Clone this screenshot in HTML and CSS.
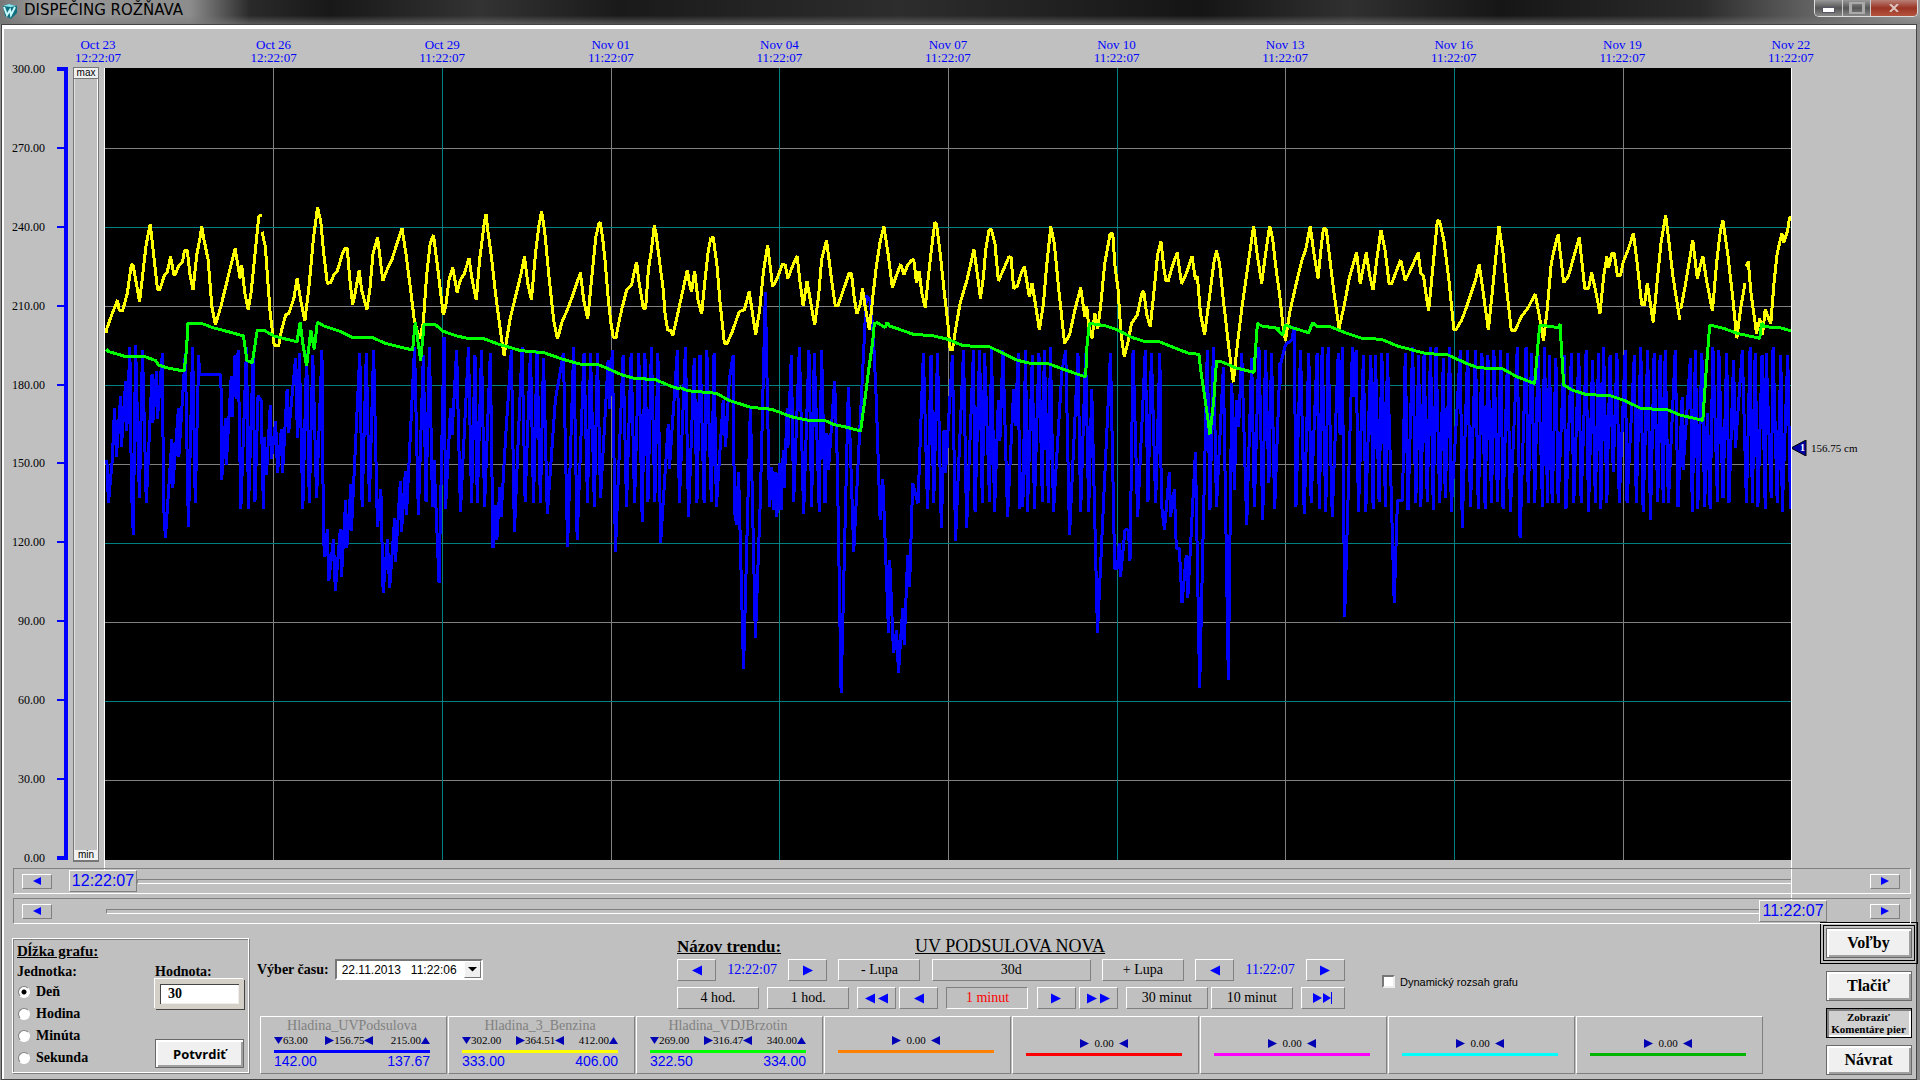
FILE: index.html
```
<!DOCTYPE html>
<html lang="sk">
<head>
  <meta charset="UTF-8">
  <meta name="viewport" content="width=device-width, initial-scale=1.0">
  <title>DISPEČING ROŽŇAVA</title>
  <link rel="stylesheet" href="styles.css">
</head>
<body>
  <!-- icon symbols -->
  <svg class="symbols" aria-hidden="true">
    <symbol id="left" viewBox="0 0 10 10"><path d="M10 0v10L0 5z"/></symbol>
    <symbol id="right" viewBox="0 0 10 10"><path d="M0 0v10l10-5z"/></symbol>
    <symbol id="up" viewBox="0 0 10 10"><path d="M0 9h10L5 1z"/></symbol>
    <symbol id="down" viewBox="0 0 10 10"><path d="M0 1h10L5 9z"/></symbol>
    <symbol id="end" viewBox="0 0 20 12"><path d="M0 1v10l9-5zM10 1v10l8-5zM18 0h1v12h-1z"/></symbol>
  </svg>

  <!-- title bar -->
  <header class="titlebar">
    <svg class="logo" viewBox="0 0 16 16" aria-hidden="true">
      <path d="M1 3l6-2 8 2v7l-6 6-6-3z" fill="#0e6f7f"/>
      <path d="M1 3l6-2 7 2-5 1z" fill="#8fe6ee"/>
      <path d="M2 4l3 8 3-5 1 5 4-8" fill="none" stroke="#c8f8fb" stroke-width="2"/>
    </svg>
    <h1>DISPEČING ROŽŇAVA</h1>
    <div class="window-buttons">
      <button class="minimize" aria-label="Minimalizovať"></button>
      <button class="maximize" aria-label="Maximalizovať"></button>
      <button class="close" aria-label="Zavrieť"><svg viewBox="0 0 10 8"><path d="M1 0l8 8M9 0L1 8"/></svg></button>
    </div>
  </header>

  <main class="window">
    <!-- trend chart -->
    <section class="trend">
      <ol class="times">
        <li>Oct 23<br>12:22:07</li>
        <li>Oct 26<br>12:22:07</li>
        <li>Oct 29<br>11:22:07</li>
        <li>Nov 01<br>11:22:07</li>
        <li>Nov 04<br>11:22:07</li>
        <li>Nov 07<br>11:22:07</li>
        <li>Nov 10<br>11:22:07</li>
        <li>Nov 13<br>11:22:07</li>
        <li>Nov 16<br>11:22:07</li>
        <li>Nov 19<br>11:22:07</li>
        <li>Nov 22<br>11:22:07</li>
      </ol>
      <ol class="scale">
        <li>300.00</li>
        <li>270.00</li>
        <li>240.00</li>
        <li>210.00</li>
        <li>180.00</li>
        <li>150.00</li>
        <li>120.00</li>
        <li>90.00</li>
        <li>60.00</li>
        <li>30.00</li>
        <li>0.00</li>
      </ol>
      <div class="range">
        <button>max</button>
        <button>min</button>
      </div>
      <div class="plot">
        <svg viewBox="105 68 1686 792" preserveAspectRatio="none" role="img" aria-label="Trend UV PODSULOVA NOVA">
          <path class="grid" d="M105 148.500H1791M105 306.500H1791M105 464.500H1791M105 622.500H1791M105 780.500H1791M273.500 68V860M611.500 68V860M948.500 68V860M1285.500 68V860M1623.500 68V860"/>
          <path class="grid alt" d="M105 227.500H1791M105 385.500H1791M105 543.500H1791M105 701.500H1791M442.500 68V860M779.500 68V860M1117.500 68V860M1454.500 68V860"/>

          <!-- Hladina_UVPodsulova -->
          <g class="line blue">
            <polyline transform="translate(100 300) scale(.38265 .33333)" points="18,480 22,610 32,480 38,325 43,470 54,287 56,440 67,243 70,392 78,142 82,560 87,706 93,136 103,595 111,150 121,610 136,222 138,368 148,213 150,358 163,160 166,610 171,715 188,418 190,565 205,325 206,470 223,160 231,682 242,142 249,610 258,166 260,225 316,225 318,540 328,355 330,495 343,228 345,352 353,166 357,296 361,150 368,628 383,140 388,628 400,175 405,605 413,287 421,302 427,628 430,412 435,525 445,316 448,478 459,364 464,518 474,388 477,518 489,268 493,398 511,175 516,415 521,160 530,628 540,160 547,610 556,166 566,595 580,150 584,720 588,770 594,688 598,842 610,718 615,872 628,688 631,832 642,600 645,745 656,552 657,692 679,160 685,620 696,160 704,605 715,150 725,682 734,568 740,880 751,718 757,865 770,655 772,785 785,544 788,697 798,514 801,645 822,142 832,645 845,166 852,605 861,142 869,620 873,480 886,848 899,112 903,628 916,325 920,405 932,150 942,635 963,142 971,610 980,166 986,610 997,150 1005,620 1020,160 1027,745 1034,616 1037,720 1045,562 1048,652 1060,412 1075,150 1083,697 1103,142 1111,605 1125,150 1133,610 1142,150 1151,610 1159,175 1169,643 1190,300 1211,160 1222,740 1238,142 1247,720 1265,160 1274,610 1282,160 1292,620 1300,160 1308,595 1328,180 1331,328 1339,150 1347,755 1367,166 1376,620 1388,160 1397,610 1408,160 1417,667 1424,160 1432,605 1441,142 1450,605 1458,160 1465,730 1485,373 1488,508 1509,150 1514,610 1530,142 1538,652 1553,175 1560,610 1568,166"/>
            <polyline transform="translate(680 200) scale(.38265 .33333)" points="53,465 63,910 70,450 82,905 89,460 95,920 113,600 119,740 129,537 139,465 142,930 148,975 153,815 166,1408 184,617 197,1315 210,900 223,277 234,920 240,800 244,930 250,815 253,950 260,790 264,930 270,750 272,865 280,625 282,745 291,465 297,905 312,442 323,943 337,450 344,920 351,460 364,935 370,450 379,910 384,700 388,810 404,543 411,780 421,1480 440,562 454,1055 472,640 487,287 497,303 505,400 513,600 523,960 530,837 545,1298 548,1080 558,1360 566,1290 571,1418 582,1225 586,1335 595,1065 600,1160 608,850 622,910 636,460 647,928 656,465 663,910 673,460 683,983 690,690 694,818 712,465 720,1022 741,450 749,983 767,450 771,935 783,450 790,910 796,460 809,905 814,442 822,935 832,600 836,722 844,450 856,950 872,567 876,677 884,460 888,928 894,815 896,920 903,450 908,935 921,465 926,928 938,460 947,905 952,450 963,910 968,442 976,935 998,514 1008,450 1018,1006 1040,460 1047,935 1060,460 1068,935 1076,568 1091,1298 1125,460 1136,1105 1143,1105 1148,1028 1151,1132 1163,990 1172,990 1176,1083 1184,450 1196,950 1216,450 1223,905 1232,460 1243,910 1254,460 1258,910 1266,990 1279,815 1282,950 1292,868 1297,1045 1305,1045 1312,1210 1323,1065 1327,1195 1347,757 1358,1465 1378,450 1385,930 1394,442 1402,920 1420,500 1433,1440 1442,550 1449,870 1454,600 1460,680 1468,460 1481,975 1494,475 1501,920 1513,442 1523,960 1530,450 1539,850 1546,460 1554,928 1568,490"/>
            <polyline transform="translate(1200 200) scale(.45918 .33333)" points="174,560 176,490 186,435 200,420 205,380 209,920 219,450 227,943 237,460 242,910 255,460 260,928 266,442 274,935 279,442 288,950 301,460 305,705 310,442 315,1250 332,442 336,590 340,450 345,935 356,465 361,935 372,465 377,928 382,465 390,905 396,460 404,920 408,460 423,1210 430,902 441,902 447,460 453,930 463,442 470,910 476,465 481,920 488,460 495,905 502,442 508,930 514,442 522,910 530,475 534,895 544,442 547,935 567,450 571,983 583,450 589,920 600,450 606,928 614,460 621,928 627,465 635,910 640,450 648,905 655,450 660,928 670,460 676,935 691,442 697,1015 710,442 715,910 722,460 729,910 736,460 746,920 750,442 757,910 761,465 767,910 775,475 780,910 793,465 797,928 809,460 814,910 825,460 830,910 841,450 846,935 855,480 861,910 868,460 873,928 879,442 886,910 893,465 900,815 908,460 913,910 926,450 930,910 946,465 950,910 960,442 965,935 975,450 981,960 989,460 997,905 1002,465 1009,910 1013,450 1020,910 1035,450 1041,920 1050,590 1052,810 1068,475 1072,935 1079,450 1084,928 1093,460 1099,920 1105,640 1111,928 1117,442 1127,905 1130,450 1139,895 1147,460 1152,910 1162,480 1166,745 1181,450 1190,910 1198,442 1203,910 1209,460 1215,920 1224,465 1231,928 1233,460 1244,895 1248,442 1257,910 1265,465 1268,935 1280,465 1286,928"/>
          </g>

          <!-- Hladina_3_Benzina -->
          <g class="line yellow">
            <polyline transform="scale(.40816 .33333)" points="262,1000 262,985 275,940 288,900 292,930 300,933 312,880 322,792 326,795 342,905 358,735 368,672 386,870 392,868 403,825 410,815 418,770 426,825 430,822 438,797 447,785 452,752 459,752 465,820 473,870 482,765 490,715 494,678 500,720 510,780 519,920 528,975 542,915 562,815 576,745 588,835 592,795 600,880 608,928 615,880 625,760 634,648 641,648"/>
            <polyline transform="scale(.40816 .33333)" points="642,695 650,740 656,840 662,940 672,1037 683,1037 690,990 700,945 708,940 720,895 728,835 738,910 747,962 757,860 768,715 778,622 786,665 793,760 802,850 810,848 818,825 826,815 838,765 845,745 851,747 856,825 864,915 870,880 880,810 886,870 899,928 906,870 914,760 925,712 938,842 948,810 960,780 974,725 985,685 995,765 1005,860 1015,960 1028,1017 1037,970 1045,830 1054,730 1062,705 1072,800 1086,945 1092,920 1100,840 1109,803 1120,877 1128,840 1138,820 1149,775 1157,840 1167,900 1175,780 1187,665 1191,642 1195,690 1205,780 1215,890 1228,1010 1235,1066 1250,955 1265,880 1275,830 1285,770 1293,850 1302,900 1312,760 1320,680 1327,633 1335,700 1345,830 1357,965 1366,1017 1377,965 1390,930 1405,880 1422,818 1430,900 1440,957 1450,830 1460,710 1468,668 1472,670"/>
            <polyline transform="translate(600 200) scale(.33333)" points="1,68 8,115 15,180 25,300 33,370 40,413 48,413 56,370 66,325 80,270 95,255 103,215 110,186 116,240 130,325 137,325 145,210 155,145 163,77 168,100 178,180 190,270 195,340 203,390 213,392 218,408 228,365 240,310 250,265 262,210 268,250 275,275 284,213 294,300 305,342 315,240 325,150 333,113"/>
            <polyline transform="translate(680 200) scale(.38265 .33333)" points="80,113 87,113 97,200 104,300 116,430 123,430 135,400 155,335 168,330 181,275 190,345 198,405 208,330 218,215 229,135 242,260 252,240 268,192 275,195 282,235 297,190 306,168 313,240 322,318 332,243 342,310 352,375 362,290 370,180 383,120 395,230 406,318 413,316 430,260 442,220 448,220 455,290 462,342 472,310 477,265 484,320 495,390 504,290 513,200 523,125 533,80 543,155 555,262 563,235 577,192 585,225 595,195 606,180 611,180 618,248 625,213 632,280 641,323 650,220 660,120 666,68 670,70 680,160 690,270 700,370 706,450 712,450 720,390 732,310 750,240 760,190 768,147 778,230 785,295 793,230 799,150 808,88 814,90 823,130 832,243 845,210 860,170 865,172 872,265 882,258 890,225 900,200 913,290 920,250 930,320 939,390 950,310 958,200 969,80 978,130 990,270 1005,430 1018,405 1032,330 1047,262 1058,350 1063,320 1068,375 1077,415 1084,340 1092,385 1100,310 1110,190 1124,102 1131,102 1137,200 1145,270 1152,395 1161,470 1172,420 1180,370 1195,345 1208,275 1212,275 1220,345 1229,380 1240,260 1248,165 1257,125 1264,200 1270,243 1276,243 1285,205 1299,158 1311,252 1325,215 1338,168 1347,240 1352,228 1360,340 1371,405 1385,280 1395,190 1402,152 1410,190 1420,300 1435,450 1446,547 1458,420 1470,310 1485,190 1499,78 1508,160 1520,250 1530,165 1541,78"/>
            <polyline transform="translate(1200 200) scale(.45918 .33333)" points="152,78 158,115 166,210 174,290 180,370 186,422 195,340 208,260 222,180 230,150 240,78 248,160 257,235 264,140 269,85 275,88 283,180 292,280 303,385 315,310 325,235 341,158 349,250 362,158 370,230 377,270 385,180 394,90 403,150 412,252 418,250 425,222 437,180 447,242 460,205 475,158 481,220 487,230 493,290 498,333 508,190 517,62 522,64 531,120 542,240 553,390 558,388 570,360 582,315 600,240 608,192 618,290 628,390 637,270 645,160 651,78 660,160 668,270 678,392 686,392 700,350 715,322 730,282 738,340 748,422 756,330 765,190 772,145 780,103 792,248 802,230 815,165 826,113 838,266 846,266 853,218 862,275 871,340 879,230 886,170 890,203 897,160 902,160 909,228 916,225 922,185 932,150 944,100 952,190 962,315 968,315 974,250 987,367 996,240 1004,130 1014,45 1020,110 1030,230 1045,360"/>
            <polyline transform="translate(1200 200) scale(.45918 .33333)" points="1047,328 1055,270 1065,190 1073,120 1083,235 1095,168 1103,240 1116,333 1125,190 1133,95 1139,62 1150,170 1160,290 1169,415 1178,320 1187,250"/>
            <polyline transform="translate(1200 200) scale(.45918 .33333)" points="1189,200 1194,185 1200,280 1212,400 1219,355 1225,405 1231,328 1243,372 1250,250 1257,160 1267,100 1271,128 1280,90 1284,52 1288,52"/>
          </g>

          <!-- Hladina_VDJBrzotin -->
          <g class="line green">
            <polyline transform="translate(100 300) scale(.38265 .33333)" points="16,147 22,155 45,162 70,171 120,171 146,182 152,195 180,205 220,213 226,150 230,68 235,72 270,72 295,83 335,95 375,108 384,182 398,188 411,90 430,92 455,108 485,117 515,125 523,66 530,130 540,198 551,92 560,148 568,66 585,78 630,95 660,113 715,114 745,130 780,140 817,150 824,66 838,183 847,72 878,75 895,93 930,107 960,115 1005,117 1040,132 1100,152 1160,158 1210,178 1260,194 1305,195 1365,225 1400,236 1450,238 1495,260 1516,267"/>
            <polyline transform="translate(680 200) scale(.38265 .33333)" points="0,563 20,572 95,580 130,602 185,622 240,628 290,650 330,660 380,662 400,673 440,683 472,693 483,600 493,510 503,430 508,370 515,368 536,382 541,368 548,378 610,403 660,407 700,418 740,437 810,441 880,480 910,489 960,490 1000,507 1060,531 1064,430 1070,370 1110,377 1140,388 1180,412 1210,423 1255,426 1300,447 1330,460 1356,463 1362,520 1370,580 1385,703 1395,600 1402,483 1420,487 1450,503 1500,517 1509,370 1520,378 1568,386"/>
            <polyline transform="translate(1200 200) scale(.45918 .33333)" points="165,385 180,405 186,375 200,383 237,398 245,368 255,380 285,381 320,400 350,414 395,418 430,438 490,460 540,465 580,490 605,503 660,507 690,530 729,551 735,450 740,375 780,383 784,372 792,555 810,570 840,583 895,588 925,602 960,625 1020,630 1045,645 1095,661 1103,500 1110,375 1140,385 1170,400 1219,415 1223,370 1230,380 1265,384 1288,393"/>
          </g>
        </svg>
        <!-- current value of the selected pen -->
        <div class="marker">
          <svg viewBox="0 0 16 16" aria-hidden="true"><path d="M0 8L15 0v16z"/></svg>
          <b>1</b>
          <span>156.75 cm</span>
        </div>
      </div>
    </section>

    <!-- time scrollers -->
    <div class="scroller from">
      <button aria-label="Začiatok späť"><svg><use href="#left"/></svg></button>
      <output>12:22:07</output>
      <div class="track"></div>
      <button aria-label="Začiatok dopredu"><svg><use href="#right"/></svg></button>
    </div>
    <div class="scroller to">
      <button aria-label="Koniec späť"><svg><use href="#left"/></svg></button>
      <div class="track"></div>
      <output>11:22:07</output>
      <button aria-label="Koniec dopredu"><svg><use href="#right"/></svg></button>
    </div>

    <section class="controls">
      <!-- chart length -->
      <form class="length">
        <div class="units">
          <h2>Dĺžka grafu:</h2>
          <h3>Jednotka:</h3>
          <label><input type="radio" name="unit" checked> Deň</label>
          <label><input type="radio" name="unit"> Hodina</label>
          <label><input type="radio" name="unit"> Minúta</label>
          <label><input type="radio" name="unit"> Sekunda</label>
        </div>
        <div class="amount">
          <label for="amount">Hodnota:</label>
          <input type="text" id="amount" value="30">
          <button type="button">Potvrdiť</button>
        </div>
      </form>

      <div class="center">
        <div class="top">
          <div class="picker">
            <label for="time">Výber času:</label>
            <div class="combo">
              <input type="text" id="time" value="22.11.2013   11:22:06">
              <button aria-label="Otvoriť kalendár"><svg viewBox="0 0 8 4"><path d="M0 0h8L4 4z"/></svg></button>
            </div>
          </div>

          <div class="nav">
            <div class="names">
              <h2>Názov trendu:</h2>
              <p>UV PODSULOVA NOVA</p>
            </div>
            <div class="row">
              <button class="small" aria-label="Späť"><svg><use href="#left"/></svg></button>
              <output>12:22:07</output>
              <button class="small" aria-label="Dopredu"><svg><use href="#right"/></svg></button>
              <button>- Lupa</button>
              <button class="wide">30d</button>
              <button>+ Lupa</button>
              <button class="small" aria-label="Späť"><svg><use href="#left"/></svg></button>
              <output>11:22:07</output>
              <button class="small" aria-label="Dopredu"><svg><use href="#right"/></svg></button>
            </div>
            <div class="row">
              <button>4 hod.</button>
              <button>1 hod.</button>
              <div class="pair">
                <button class="small" aria-label="Rýchlo späť"><svg><use href="#left"/></svg><svg><use href="#left"/></svg></button>
                <button class="small" aria-label="Späť"><svg><use href="#left"/></svg></button>
              </div>
              <button class="active">1 minut</button>
              <div class="pair">
                <button class="small" aria-label="Dopredu"><svg><use href="#right"/></svg></button>
                <button class="small" aria-label="Rýchlo dopredu"><svg><use href="#right"/></svg><svg><use href="#right"/></svg></button>
              </div>
              <div class="pair">
                <button>30 minut</button>
                <button>10 minut</button>
              </div>
              <button class="last" aria-label="Na koniec"><svg class="end"><use href="#end"/></svg></button>
            </div>
          </div>

          <label class="dynamic"><input type="checkbox"> Dynamický rozsah grafu</label>
        </div>

        <!-- pens -->
        <ul class="pens">
          <li class="pen blue">
            <h4>Hladina_UVPodsulova</h4>
            <div class="values">
              <span><svg><use href="#down"/></svg>63.00</span>
              <span><svg><use href="#right"/></svg>156.75<svg><use href="#left"/></svg></span>
              <span>215.00<svg><use href="#up"/></svg></span>
            </div>
            <hr>
            <div class="limits"><span>142.00</span><span>137.67</span></div>
          </li>
          <li class="pen yellow">
            <h4>Hladina_3_Benzina</h4>
            <div class="values">
              <span><svg><use href="#down"/></svg>302.00</span>
              <span><svg><use href="#right"/></svg>364.51<svg><use href="#left"/></svg></span>
              <span>412.00<svg><use href="#up"/></svg></span>
            </div>
            <hr>
            <div class="limits"><span>333.00</span><span>406.00</span></div>
          </li>
          <li class="pen green">
            <h4>Hladina_VDJBrzotin</h4>
            <div class="values">
              <span><svg><use href="#down"/></svg>269.00</span>
              <span><svg><use href="#right"/></svg>316.47<svg><use href="#left"/></svg></span>
              <span>340.00<svg><use href="#up"/></svg></span>
            </div>
            <hr>
            <div class="limits"><span>322.50</span><span>334.00</span></div>
          </li>
          <li class="pen empty orange">
            <div class="values"><svg><use href="#right"/></svg>0.00<svg><use href="#left"/></svg></div>
            <hr>
          </li>
          <li class="pen empty red">
            <div class="values"><svg><use href="#right"/></svg>0.00<svg><use href="#left"/></svg></div>
            <hr>
          </li>
          <li class="pen empty magenta">
            <div class="values"><svg><use href="#right"/></svg>0.00<svg><use href="#left"/></svg></div>
            <hr>
          </li>
          <li class="pen empty cyan">
            <div class="values"><svg><use href="#right"/></svg>0.00<svg><use href="#left"/></svg></div>
            <hr>
          </li>
          <li class="pen empty dark-green">
            <div class="values"><svg><use href="#right"/></svg>0.00<svg><use href="#left"/></svg></div>
            <hr>
          </li>
        </ul>
      </div>

      <nav class="actions">
        <div class="focus"><button>Voľby</button></div>
        <button>Tlačiť</button>
        <button class="pressed">Zobraziť<br>Komentáre pier</button>
        <button>Návrat</button>
      </nav>
    </section>
  </main>
</body>
</html>
```

FILE: styles.css
```
* {
  margin: 0;
  padding: 0;
  box-sizing: border-box;
}

body {
  display: flex;
  flex-direction: column;
  min-height: 100vh;
  background: #8c8c8c;
  font-family: "Liberation Serif", "Times New Roman", serif;
  font-size: 14px;
  color: #000;
}

ol,
ul {
  list-style: none;
}

button,
input {
  font: inherit;
  color: inherit;
  border-radius: 0;
}

svg {
  display: block;
}

.symbols {
  position: absolute;
  width: 0;
  height: 0;
}

/* title bar */
.titlebar {
  display: flex;
  align-items: flex-start;
  height: 24px;
  padding-left: 2px;
  background:
    linear-gradient(rgba(0, 0, 0, 0) 65%, rgba(120, 120, 120, 0.6)),
    linear-gradient(90deg, #777 0, #9a9a9a 40px, #8c8c8c 190px, #2a2a2a 250px, #181818 330px, #333 480px, #1a1a1a 620px, #2d2d2d 900px, #151515 1200px, #303030 1350px, #161616 1500px, #2b2b2b 1700px, #999 100%);
}

.logo {
  width: 16px;
  height: 16px;
  margin-top: 3px;
}

.titlebar h1 {
  flex: 1;
  margin-left: 6px;
  font: 15px/21px "DejaVu Sans", sans-serif;
}

.window-buttons {
  display: flex;
  height: 17px;
  margin-right: 2px;
  border: 1px solid #ddd;
  border-top: 0;
  border-radius: 0 0 5px 5px;
  overflow: hidden;
}

.window-buttons button {
  display: flex;
  justify-content: center;
  align-items: center;
  width: 28px;
  border: 0;
  border-right: 1px solid #ccc;
  background: linear-gradient(#999, #555 50%, #888);
}

.minimize::before {
  content: "";
  width: 11px;
  height: 4px;
  margin-top: 4px;
  background: #fff;
  border: 1px solid #556;
}

.maximize::before {
  content: "";
  width: 10px;
  height: 8px;
  border: 3px solid #aaa;
  border-width: 2px 3px;
}

.window-buttons .close {
  width: 46px;
  border-right: 0;
  background: linear-gradient(#b98078, #9a3424 50%, #b4543f);
}

.close svg {
  width: 10px;
  height: 8px;
  stroke: #ddc4c0;
  stroke-width: 2;
}

/* window */
.window {
  flex: 1;
  display: flex;
  flex-direction: column;
  margin: 0 3px 1px 1px;
  padding: 1px 0 0 2px;
  border: 1px solid #444;
  background: #c0c0c0;
  box-shadow: inset 2px 4px #fff;
}

/* trend chart */
.trend {
  flex: 1;
  display: grid;
  grid-template-columns: 64px 37px 1fr 125px;
  grid-template-rows: 42px 1fr;
}

.times {
  grid-column: 3;
  display: flex;
  justify-content: space-between;
  margin: 0 -24px 0 -38px;
  padding-top: 12px;
  font-size: 13px;
  line-height: 13px;
  text-align: center;
  color: #00f;
}

.times li {
  width: 48px;
}

.times li:first-child {
  width: 62px;
}

.scale {
  grid-column: 1;
  display: flex;
  flex-direction: column;
  justify-content: space-between;
  margin: -8px 0 -7px;
  background: linear-gradient(#00f, #00f) right 50% / 4px calc(100% - 14px) no-repeat;
  font-size: 12px;
  line-height: 18px;
}

.scale li {
  display: flex;
  justify-content: flex-end;
  align-items: center;
  gap: 12px;
}

.scale li::after {
  content: "";
  width: 11px;
  height: 2px;
  background: #00f;
}

.scale li:first-child::after,
.scale li:last-child::after {
  height: 4px;
}

.range {
  display: flex;
  flex-direction: column;
  justify-content: space-between;
  margin: -1px 6px -2px 5px;
  border: 1px solid #777;
  background: #c0c0c0;
  box-shadow: inset 1px 0 #e0e0e0, inset -1px 0 #fff;
}

.range button {
  height: 11px;
  border: 1px solid #777;
  border-width: 0 0 1px;
  background: #f0f0f0;
  font: 10px/10px "Liberation Sans", Arial, sans-serif;
}

.plot {
  position: relative;
  background: #000;
}

/* range cursors run down to their scrollers */
.plot::before,
.plot::after {
  content: "";
  position: absolute;
  top: 0;
  left: -1px;
  bottom: -10px;
  width: 1px;
  background: #fff;
}

.plot::after {
  left: auto;
  right: -1px;
  bottom: -40px;
}

.plot > svg {
  width: 100%;
  height: 100%;
}

.grid,
.line polyline {
  fill: none;
  stroke: #808080;
  vector-effect: non-scaling-stroke;
  shape-rendering: crispEdges;
}

.grid.alt {
  stroke: #008080;
}

.line polyline {
  stroke-width: 3;
  stroke-linejoin: bevel;
}

.line.blue polyline {
  stroke: #00f;
}

.line.yellow polyline {
  stroke: #ff0;
}

.line.green polyline {
  stroke: #0f0;
}

.marker {
  position: absolute;
  top: 47%;
  left: 100%;
  display: flex;
  align-items: center;
  gap: 4px;
  font-size: 11px;
  line-height: 16px;
  white-space: nowrap;
}

.marker svg {
  width: 16px;
  height: 16px;
  fill: #0000a8;
  stroke: #000;
}

.marker b {
  position: absolute;
  left: 9px;
  color: #fff;
  font-size: 10px;
}

/* time scrollers */
.scroller {
  position: relative;
  display: flex;
  align-items: center;
  height: 26px;
  margin: 4px 5px 0 9px;
  padding: 0 10px 0 8px;
  border: 1px solid #808080;
  border-right-color: #fff;
  border-bottom-color: #fff;
}

.scroller.from {
  margin-top: 8px;
}

.scroller button {
  display: flex;
  justify-content: center;
  align-items: center;
  width: 30px;
  height: 15px;
  border: 1px solid #fff;
  border-right-color: #808080;
  border-bottom-color: #808080;
  background: #c0c0c0;
}

.scroller svg {
  width: 8px;
  height: 10px;
  fill: #00f;
}

.scroller output {
  width: 68px;
  border: 1px solid #fff;
  border-right-color: #808080;
  border-bottom-color: #808080;
  background: #c0c0c0;
  font: 16px/20px "Liberation Sans", Arial, sans-serif;
  text-align: center;
  color: #00f;
}

.track {
  flex: 1;
  height: 5px;
  border: 1px solid #808080;
  border-width: 1px 0 1px 1px;
  border-bottom-color: #fff;
}

.from output {
  margin-left: 17px;
}

.from .track {
  margin-right: 79px;
}

.to .track {
  margin-left: 54px;
}

.to output {
  margin-right: 43px;
}

/* controls */
.controls {
  display: flex;
  height: 155px;
  padding-left: 8px;
}

.length {
  display: flex;
  justify-content: space-between;
  width: 237px;
  height: 135px;
  margin-top: 14px;
  padding: 4px;
  border: 1px solid #fff;
  box-shadow: inset 1px 1px #808080, 1px 1px #808080;
  font-weight: bold;
}

.length h2,
.length h3 {
  font-size: 14px;
  line-height: 17px;
}

.length h2 {
  font-size: 15px;
  text-decoration: underline;
}

.length h3 {
  margin: 3px 0 1px;
}

.units label {
  display: flex;
  align-items: center;
  gap: 6px;
  height: 22px;
}

.units input {
  appearance: none;
  width: 12px;
  height: 12px;
  margin-left: 1px;
  border: 1px solid #fff;
  border-top-color: #808080;
  border-left-color: #808080;
  border-radius: 50%;
  background: #fff;
}

.units input:checked {
  background: radial-gradient(#000 2px, #fff 3px);
}

.amount {
  display: flex;
  flex-direction: column;
  width: 89px;
  padding-top: 20px;
}

.amount label {
  height: 16px;
  line-height: 17px;
}

.amount input {
  height: 30px;
  padding-left: 8px;
  border: 5px solid #d4d0c8;
  background: #fff;
  box-shadow: inset 1px 1px #444, inset -1px -1px #eee, 1px 1px #444, -1px -1px #fff;
}

.amount button,
.actions button {
  height: 30px;
  border: 1px solid #696969;
  background: #f0f0f0;
  box-shadow: inset 2px 2px #fff, inset -2px -2px #a0a0a0;
}

.amount button {
  height: 29px;
  margin-top: 30px;
  font: bold 13px "Open Sans", "Noto Sans", sans-serif;
}

.center {
  flex: 1;
  padding: 14px 0 0 8px;
}

.top {
  display: flex;
  align-items: flex-start;
  height: 78px;
}

.picker {
  display: flex;
  align-items: center;
  gap: 6px;
  width: 420px;
  padding-top: 21px;
  font-weight: bold;
}

.combo {
  display: flex;
  width: 148px;
  height: 21px;
  border: 2px solid #fff;
  border-top-color: #777;
  border-left-color: #777;
  background: #fff;
}

.combo input {
  flex: 1;
  min-width: 0;
  padding-left: 5px;
  border: 0;
  background: none;
  font: 12px "Liberation Sans", Arial, sans-serif;
}

.combo button {
  width: 17px;
  padding: 0 3px;
  border: 1px solid #fff;
  border-right-color: #777;
  border-bottom-color: #777;
  background: #f0f0f0;
}

.nav {
  display: flex;
  flex-direction: column;
  gap: 6px;
  width: 668px;
}

.names {
  display: flex;
  gap: 134px;
  height: 15px;
  font-size: 18px;
  line-height: 17px;
  text-decoration: underline;
}

.names h2 {
  font-size: 17px;
}

.row {
  display: flex;
  justify-content: space-between;
  align-items: center;
}

.pair {
  display: flex;
  gap: 3px;
}

.row button {
  display: flex;
  justify-content: center;
  align-items: center;
  gap: 3px;
  width: 82px;
  height: 22px;
  border: 1px solid #fff;
  border-right-color: #808080;
  border-bottom-color: #808080;
  background: #c0c0c0;
}

.row .small {
  width: 39px;
}

.row .last {
  width: 44px;
}

.row .wide {
  width: 159px;
}

.row .active {
  border-color: #808080 #fff #fff #808080;
  color: #f00;
}

.row output {
  color: #00f;
}

.row svg {
  width: 10px;
  height: 11px;
  fill: #00f;
}

.row .end {
  width: 20px;
  height: 12px;
}

.dynamic {
  display: flex;
  align-items: center;
  gap: 5px;
  margin: 37px 0 0 37px;
  font: 11px "Liberation Sans", Arial, sans-serif;
}

.dynamic input {
  appearance: none;
  width: 13px;
  height: 13px;
  border: 2px solid #eee;
  border-top-color: #777;
  border-left-color: #777;
  background: #fff;
}

/* pens */
.pens {
  display: flex;
  gap: 1px;
  margin: 0 1px 0 3px;
}

.pen {
  flex: 1;
  height: 58px;
  padding: 1px 16px 0 13px;
  border: 1px solid #fff;
  border-right-color: #808080;
  border-bottom-color: #808080;
}

.pen h4 {
  font-weight: normal;
  line-height: 15px;
  text-align: center;
  color: #808080;
}

.values,
.values span {
  display: flex;
  justify-content: space-between;
  align-items: center;
}

.values {
  height: 14px;
  font-size: 11px;
}

.values svg {
  width: 9px;
  height: 9px;
  fill: #0000b4;
}

.pen hr {
  height: 3px;
  margin-top: 3px;
  border: 0;
  background: currentColor;
}

.limits {
  display: flex;
  justify-content: space-between;
  font: 14px/17px "Liberation Sans", Arial, sans-serif;
  color: #00f;
}

.empty {
  padding-top: 19px;
}

.empty.orange {
  padding-top: 16px;
}

.empty .values {
  justify-content: center;
  gap: 5px;
}

.pen.blue hr { color: #00f; }
.pen.yellow hr { color: #ff0; }
.pen.green hr { color: #0f0; }
.pen.orange hr { color: #ff8000; }
.pen.red hr { color: #f00; }
.pen.magenta hr { color: #f0f; }
.pen.cyan hr { color: #0ff; }
.pen.dark-green hr { color: #00b400; }

/* action buttons */
.actions {
  display: flex;
  flex-direction: column;
  align-items: center;
  gap: 7px;
  width: 95px;
  margin: -2px 0 0 57px;
}

.focus {
  padding: 2px;
  border: 4px double #000;
}

.actions button {
  display: block;
  width: 86px;
  font-size: 16px;
  font-weight: bold;
}

.actions .pressed {
  border: 1px solid #000;
  background: #d0d0d0;
  box-shadow: inset 2px 2px #808080, inset -2px -2px #fff;
  font-size: 11px;
  line-height: 12px;
}
```
